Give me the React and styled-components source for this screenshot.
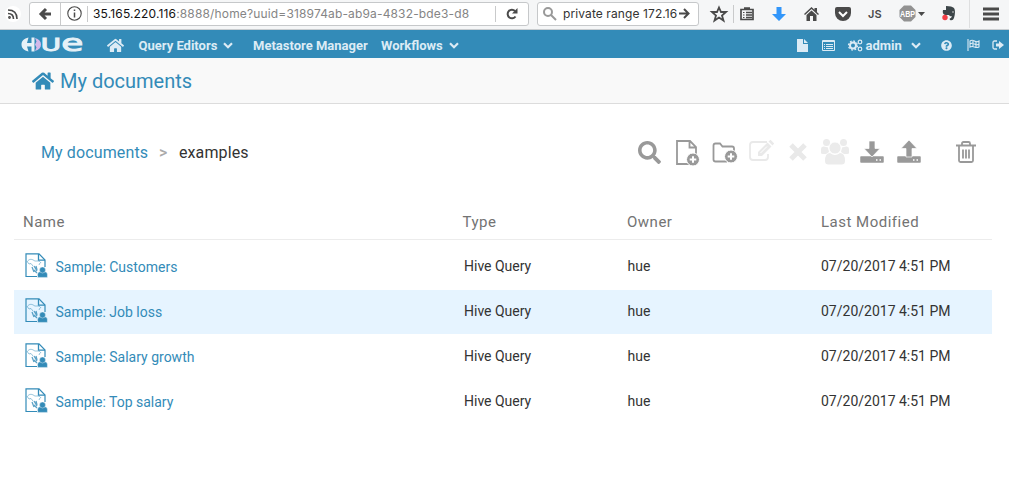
import React from "react";
import styled, { createGlobalStyle } from "styled-components";
import { FaHome, FaQuestionCircle, FaSearch } from "react-icons/fa";

const GlobalStyle = createGlobalStyle`
  * { box-sizing: border-box; }
  body { margin: 0; background: #fff; font-family: Roboto, "Liberation Sans", sans-serif; }
  svg { display: block; flex: none; overflow: visible; }
`;

const Page = styled.div`
  width: 1009px;
  height: 478px;
  overflow: hidden;
  background: #fff;
`;

const BrowserBar = styled.header`
  display: flex;
  align-items: center;
  height: 30px;
  padding-bottom: 2px;
  background: #f5f6f7;
  border-bottom: 1px solid #c9cdd0;
  font-family: Inter, "Liberation Sans", sans-serif;
  font-size: 12px;
  color: #4a4a4a;
`;

const Slot = styled.span`
  display: flex;
  align-items: center;
  flex: none;
  width: ${(p) => p.$w}px;
  margin-left: ${(p) => p.$gap || 0}px;
  color: ${(p) => p.$color || "inherit"};
`;

const Label = styled.span`
  flex: none;
  white-space: nowrap;
  width: ${(p) => p.$w}px;
  margin-left: ${(p) => p.$gap || 0}px;
  letter-spacing: ${(p) => p.$track || 0}px;
`;

const Field = styled.div`
  display: flex;
  align-items: center;
  flex: none;
  width: ${(p) => p.$w}px;
  height: 24px;
  margin-left: ${(p) => p.$gap}px;
  border: 1px solid #c6c8ca;
  border-radius: 3px;
  background: #fff;
`;

const Divider = styled.i`
  flex: none;
  width: 1px;
  height: ${(p) => p.$h}px;
  margin-left: ${(p) => p.$gap}px;
  background: ${(p) => p.$color || "#c9cacb"};
`;

const Url = styled(Label)`
  color: #858585;
  b { font-weight: 400; color: #111; }
`;

const SearchText = styled(Label)`
  color: #333;
`;

const FeedBadge = styled.span`
  display: flex;
  align-items: center;
  justify-content: center;
  width: 16px;
  height: 16px;
  margin-left: 5px;
  border-radius: 8px;
  background: #fff;
`;

const ScriptTag = styled(Label)`
  font-size: 11px;
  font-weight: 600;
`;

const NavBar = styled.nav`
  display: flex;
  align-items: center;
  height: 28px;
  padding-top: 2px;
  background: #338bb8;
  color: #dcebf5;
  font-size: 13px;
  font-weight: 700;
`;

const TitleBar = styled.div`
  display: flex;
  align-items: center;
  height: 46px;
  padding-left: 32px;
  background: #f9f9f9;
  border-bottom: 1px solid #dcdcdc;
  color: #338bb8;
`;

const Title = styled.h1`
  margin: 0 0 0 6px;
  font-size: 20px;
  font-weight: 400;
  letter-spacing: 0;
  line-height: 24px;
`;

const ActionBar = styled.div`
  display: flex;
  align-items: center;
  height: 97px;
  padding-left: 41px;
  font-size: 16px;
  color: #333;
`;

const Crumbs = styled.div`
  display: flex;
  width: 597px;
  a { color: #338bb8; }
  em { font-style: normal; font-weight: 500; color: #aaa; }
`;

const Tools = styled.div`
  display: flex;
  align-items: center;
  padding-bottom: 1px;
`;

const Table = styled.section`
  margin-left: 14px;
  width: 978px;
`;

const Row = styled.div`
  display: grid;
  grid-template-columns: 450px 163.5px 193.5px 1fr;
  align-items: center;
  height: 44px;
  margin-bottom: 1px;
  padding-bottom: 2px;
  background: ${(p) => (p.$active ? "#e6f4ff" : "transparent")};
  font-size: 14px;
  color: #333;
`;

const HeadRow = styled(Row)`
  grid-template-columns: 448.5px 164.5px 194px 1fr;
  height: 39px;
  margin-bottom: 5px;
  padding: 4px 0 0;
  border-bottom: 1px solid #ececec;
  font-size: 15px;
  color: #737373;
`;

const NameCell = styled.div`
  display: flex;
  align-items: center;
  padding-left: ${(p) => p.$pad}px;
  svg { margin-bottom: 2px; }
`;

const DocLink = styled.a`
  margin: 2px 0 0 8.5px;
  color: #338bb8;
`;

const Cell = styled.div`
  letter-spacing: ${(p) => p.$track || 0}px;
`;

const Icon = ({ w, h, vb, children, sw = 2, fill = "none" }) => (
  <svg width={w} height={h} viewBox={vb || `0 0 ${w} ${h}`} fill={fill}
    stroke={fill === "none" ? "currentColor" : "none"} strokeWidth={sw}>
    {children}
  </svg>
);

const Chevron = () => (
  <Icon w={10} h={7} sw={2.2}><path d="M1 1.2 5 5.2 9 1.2" /></Icon>
);

const HueLogo = () => (
  <svg width="62" height="20" viewBox="0 -2 62 20" fontFamily="DejaVu Sans" fontWeight="400" fill="#e6f1f7">
    <path d="M7.500 .5C3 1.500 .5 4 .5 7.500S3 13.500 7.500 14.500L6 9.500H10.500V14.500H13.500V.5H10.500V6H6Z" />
    <path d="M14 1C18 2 20 4.500 20 7.500S18 13 14 14L15.500 10.500 14 7.500 15.500 4.500Z" fill="#d3b9ea" />
    <g stroke="#e6f1f7" strokeWidth="1">
      <text transform="translate(19.800 14) scale(1.580 1)" fontSize="17.500">U</text>
      <text transform="translate(40.200 14) scale(1.560 1)" fontSize="23">e</text>
    </g>
  </svg>
);

const HiveDoc = () => (
  <svg width="22" height="25" viewBox="0 0 22 25" fill="none" stroke="#338bb8">
    <path d="M12 23.500H1V.800H14L20 7V14" strokeWidth="1.200" />
    <path d="M13.500 1V7.200H20" strokeWidth="1.300" />
    <path d="M2 9C4 5.500 7 6 9 7.500S14 6.500 16 10M2.500 9 4 11 6 10.500 8 13M15 10 14 12" strokeWidth=".8" opacity=".65" />
    <path d="M7 14 9 19M9 13 12 18M9 17 12 20M11 13 12 17" strokeWidth="1.300" opacity=".8" />
    <g fill="#338bb8" stroke="#fff" strokeWidth=".4">
      <path d="M12.600 24.400V21.500Q12.600 18.700 15.500 18.700H19.500Q22.400 18.700 22.400 21.500V24.400Z" />
      <circle cx="17.500" cy="17" r="3" />
    </g>
  </svg>
);

const PlusBadge = ({ cx, cy }) => (
  <g>
    <circle cx={cx} cy={cy} r="6.500" fill="currentColor" stroke="#fff" strokeWidth="1" />
    <path d={`M${cx - 3.3} ${cy}h6.600M${cx} ${cy - 3.3}v6.600`} stroke="#fff" strokeWidth="2" />
  </g>
);

const Tray = () => (
  <g>
    <path d="M1 17H23V22H1Z" strokeWidth="1.500" strokeLinejoin="round" fill="currentColor" />
    <path d="M16 20h1.500M19.500 20H21" stroke="#fff" strokeWidth="1.500" />
  </g>
);

function Toolbar() {
  return (
    <Tools>
      <Slot $w={24} $color="#999"><FaSearch size={23} /></Slot>
      <Slot $w={24} $gap={14} $color="#999">
        <Icon w={24} h={28} sw={1.8}>
          <path d="M1 26V3H14L20 9V26ZM13.500 3V9.500H20" /><PlusBadge cx={17} cy={21.5} />
        </Icon>
      </Slot>
      <Slot $w={26} $gap={12} $color="#999">
        <Icon w={26} h={24} sw={1.8}>
          <path d="M15 21.500H3.500Q1.500 21.500 1.500 19.500V5.500Q1.500 3.500 3.500 3.500H8L10.500 6.500H20Q22 6.500 22 8.500V12" /><PlusBadge cx={19} cy={16.5} />
        </Icon>
      </Slot>
      <Slot $w={26} $gap={11} $color="#e9e9e9">
        <Icon w={26} h={26} sw={1.8}>
          <path d="M18 3H4Q1 3 1 6V18Q1 21 4 21H16Q19 21 19 18V15" />
          <path d="M9 17V13L18.500 3.500 22.500 7.500 13 17Z" fill="currentColor" stroke="none" />
          <path d="M19.500 2.500 21.500 .8 25.200 4.500 23.500 6.500Z" fill="currentColor" stroke="none" />
          <path d="M11.500 14 18 7.500" stroke="#fff" strokeWidth="1" />
        </Icon>
      </Slot>
      <Slot $w={18} $gap={13.5} $color="#e9e9e9">
        <Icon w={18} h={18} sw={5}><path d="M2 2 16 16M16 2 2 16" /></Icon>
      </Slot>
      <Slot $w={28} $gap={14.5} $color="#ebebeb">
        <svg width="28" height="28" viewBox="0 0 28 28" fill="currentColor">
          <circle cx="5.500" cy="4.500" r="3.500" /><circle cx="22.500" cy="4.500" r="3.500" />
          <path d="M0 15V11Q0 8 3 8.500L7 9.500 8 14 5 16H2Q0 16 0 15ZM28 15V11Q28 8 25 8.500L21 9.500 20 14 23 16H26Q28 16 28 15Z" />
          <path d="M4 23Q4 15 9 15 14 19 19 15 24 15 24 23 24 26.500 20.500 26.500H7.500Q4 26.500 4 23Z" />
          <circle cx="14" cy="10" r="6" stroke="#fff" strokeWidth=".8" />
        </svg>
      </Slot>
      <Slot $w={24} $gap={11} $color="#999">
        <Icon w={24} h={24}>
          <Tray />
          <path d="M9 1H15V8.500H20L12 17 4 8.500H9Z" fill="currentColor" stroke="#fff" strokeWidth=".7" />
        </Icon>
      </Slot>
      <Slot $w={24} $gap={13} $color="#999">
        <Icon w={24} h={24}>
          <Tray />
          <path d="M9 17H15V8.500H20L12 0 4 8.500H9Z" fill="currentColor" stroke="#fff" strokeWidth=".7" />
        </Icon>
      </Slot>
      <Slot $w={20} $gap={35} $color="#999">
        <Icon w={20} h={24} sw={1.8}>
          <path d="M0 5.500H20M6 5.500V3.500Q6 2 7.500 2H12.500Q14 2 14 3.500V5.500M3 5.500V20.500Q3 22 4.500 22H15.500Q17 22 17 20.500V5.500M7 9.500V18.500M10 9.500V18.500M13 9.500V18.500" />
        </Icon>
      </Slot>
    </Tools>
  );
}

function Browser() {
  return (
    <BrowserBar>
      <FeedBadge>
        <Icon w={10} h={10} sw={1.6}><path d="M0 1Q9 1 9 10M0 4.500Q5.500 4.500 5.500 10" /><circle cx="1.500" cy="8.500" r=".6" /></Icon>
      </FeedBadge>
      <Field $w={500} $gap={8}>
        <Slot $w={13} $gap={9}><Icon w={13} h={12} sw={3}><path d="M7 1 2 6 7 11M2 6H12" /></Icon></Slot>
        <Divider $h={22} $gap={8} />
        <Slot $w={15} $gap={6}>
          <Icon w={15} h={15} sw={1.1}><circle cx="7.500" cy="7.500" r="6.700" /><path d="M7.500 6.500V11.500M7.500 3.500V5" strokeWidth="1.500" /></Icon>
        </Slot>
        <Divider $h={16} $gap={5} />
        <Url $w={379} $gap={5} $track={0.15}><b>35.165.220.116</b>:8888/home?uuid=318974ab-ab9a-4832-bde3-d8</Url>
        <Divider $h={16} $gap={23} />
        <Slot $w={12} $gap={10}>
          <Icon w={12} h={12} sw={2}><path d="M9.500 8.500A4.300 4.300 0 1 1 9 3" /><path d="M6 5.500H11.500V0Z" fill="currentColor" stroke="none" /></Icon>
        </Slot>
      </Field>
      <Field $w={162} $gap={8}>
        <Slot $w={14} $gap={5} $color="#999"><Icon w={14} h={14} sw={2}><circle cx="5" cy="5" r="4" /><path d="M8 8 13 13" /></Icon></Slot>
        <SearchText $w={115} $gap={6} $track={0.1}>private range 172.16</SearchText>
        <Slot $w={11} $gap={1}><Icon w={11} h={11} sw={2}><path d="M0 5.500H9M5 1 9.500 5.500 5 10" /></Icon></Slot>
      </Field>
      <Slot $w={16} $gap={12}>
        <Icon w={16} h={16} sw={1.8}><path d="M8 1.500 10 6H15L11 9.500 12.500 14.500 8 11.500 3.500 14.500 5 9.500 1 6H6Z" /></Icon>
      </Slot>
      <Divider $h={18} $gap={6} />
      <Slot $w={14} $gap={6}>
        <Icon w={14} h={15} sw={1.7}><path d="M1 3.500H13V13.500H1ZM6 6.500h6M6 9h6M6 11.500h6M4 2H10" /><path d="M3 6.500h1.500M3 9h1.500M3 11.500h1.500" strokeWidth="1" /></Icon>
      </Slot>
      <Slot $w={14} $gap={18} $color="#3296fa">
        <Icon w={14} h={14} fill="currentColor"><path d="M4.500 0H9.500V7H14L7 14 0 7H4.500Z" /></Icon>
      </Slot>
      <Slot $w={15} $gap={18}>
        <Icon w={15} h={14} fill="currentColor"><path d="M7.500 0 15 7 14 8 7.500 2 1 8 0 7ZM10.500 1H13V5L10.500 3ZM2.500 8 7.500 3.500 12.500 8V14H9V9H6V14H2.500Z" /></Icon>
      </Slot>
      <Slot $w={16} $gap={16}>
        <Icon w={16} h={14} fill="currentColor"><path d="M2 0H14Q16 0 16 2V6A8 8 0 0 1 0 6V2Q0 0 2 0Z" /><path d="M4 5 8 9 12 5" fill="none" stroke="#fff" strokeWidth="2" /></Icon>
      </Slot>
      <ScriptTag $w={14} $gap={17}>JS</ScriptTag>
      <Slot $w={17} $gap={17}>
        <svg width="17" height="17" viewBox="0 0 17 17">
          <path d="M5 .5H12L16.500 5V12L12 16.500H5L.5 12V5Z" fill="#929292" />
          <text x="1" y="11.500" textLength="15" lengthAdjust="spacingAndGlyphs" fill="#fff" fontFamily="Liberation Sans" fontWeight="700" fontSize="9">ABP</text>
        </svg>
      </Slot>
      <Slot $w={7} $gap={2}><Icon w={7} h={4} fill="currentColor"><path d="M0 0H7L3.500 4Z" /></Icon></Slot>
      <Slot $w={14} $gap={17}>
        <Icon w={14} h={15} fill="#3d4649">
          <path d="M4 0Q10 0 12 2 14 5 12 12 11 15 8 14 7 12 9 12L10 10Q8 11 7 9L3 9Q0 8 1 4H4Z" />
          <circle cx="11" cy="6" r=".7" fill="#fff" /><circle cx="3" cy="11.500" r="2.700" fill="#f33e46" />
        </Icon>
      </Slot>
      <Divider $h={29} $gap={13} $color="#dedfe0" />
      <Slot $w={16} $gap={13}><Icon w={16} h={14} sw={3}><path d="M0 2H16M0 7H16M0 12H16" /></Icon></Slot>
    </BrowserBar>
  );
}

const files = ["Sample: Customers", "Sample: Job loss", "Sample: Salary growth", "Sample: Top salary"];

export default function App() {
  return (
    <Page>
      <GlobalStyle />
      <Browser />
      <NavBar>
        <Slot $w={62} $gap={20.5}><HueLogo /></Slot>
        <Slot $w={17} $gap={24.5}><FaHome size={17} /></Slot>
        <Label $w={79} $gap={14.5}>Query Editors</Label>
        <Slot $w={10} $gap={5.5}><Chevron /></Slot>
        <Label $w={115} $gap={20}>Metastore Manager</Label>
        <Label $w={62} $gap={13}>Workflows</Label>
        <Slot $w={10} $gap={6}><Chevron /></Slot>
        <Slot $w={11} $gap={337.5}>
          <Icon w={11} h={13} fill="currentColor"><path d="M0 0H6V5H11V13H0ZM7 0 11 4H7Z" /></Icon>
        </Slot>
        <Slot $w={13} $gap={14}>
          <Icon w={13} h={11} sw={1}><path d="M.5 .5H12.500V10.500H.5ZM.5 1.500H12.500M2 4.500h1M4 4.500h7M2 6.500h1M4 6.500h7M2 8.500h1M4 8.500h7" /></Icon>
        </Slot>
        <Slot $w={15} $gap={13}>
          <Icon w={15} h={13} sw={2}>
            <circle cx="5" cy="6.500" r="3" /><circle cx="5" cy="6.500" r="4.500" strokeWidth="1.300" strokeDasharray="1.800 1.700" />
            <circle cx="12" cy="3" r="1.800" strokeWidth="1.200" /><circle cx="12" cy="10" r="1.800" strokeWidth="1.200" />
          </Icon>
        </Slot>
        <Label $w={37} $gap={3}>admin</Label>
        <Slot $w={10} $gap={8}><Chevron /></Slot>
        <Slot $w={11} $gap={20}><FaQuestionCircle size={11} /></Slot>
        <Slot $w={13} $gap={15}>
          <Icon w={13} h={12} sw={1.1}><path d="M1 0V12M3 2Q5 .5 7.500 2T12 2V8Q10 9 7.500 8T3 8ZM3 5Q5 3.500 7.500 5T12 5M6 1V8M9 2V9" /></Icon>
        </Slot>
        <Slot $w={12} $gap={12.5}>
          <Icon w={12} h={10} sw={1.3}><path d="M5 1H2.500Q1 1 1 2.500V7.500Q1 9 2.500 9H5" /><path d="M4 3.500H7V1L12 5 7 9V6.500H4Z" fill="currentColor" stroke="none" /></Icon>
        </Slot>
      </NavBar>
      <TitleBar>
        <FaHome size={22} />
        <Title>My documents</Title>
      </TitleBar>
      <ActionBar>
        <Crumbs>
          <Label as="a" $w={107} $track={0.12}>My documents</Label>
          <Label as="em" $w={8} $gap={11}>&gt;</Label>
          <Label $w={71} $gap={12} $track={0.1}>examples</Label>
        </Crumbs>
        <Toolbar />
      </ActionBar>
      <Table>
        <HeadRow>
          <NameCell $pad={9}><Cell $track={0.5}>Name</Cell></NameCell>
          <Cell $track={0.5}>Type</Cell>
          <Cell $track={0.5}>Owner</Cell>
          <Cell $track={0.5}>Last Modified</Cell>
        </HeadRow>
        {files.map((name, i) => (
          <Row key={name} $active={i === 1}>
            <NameCell $pad={11}><HiveDoc /><DocLink>{name}</DocLink></NameCell>
            <Cell>Hive Query</Cell>
            <Cell>hue</Cell>
            <Cell>07/20/2017 4:51 PM</Cell>
          </Row>
        ))}
      </Table>
    </Page>
  );
}
